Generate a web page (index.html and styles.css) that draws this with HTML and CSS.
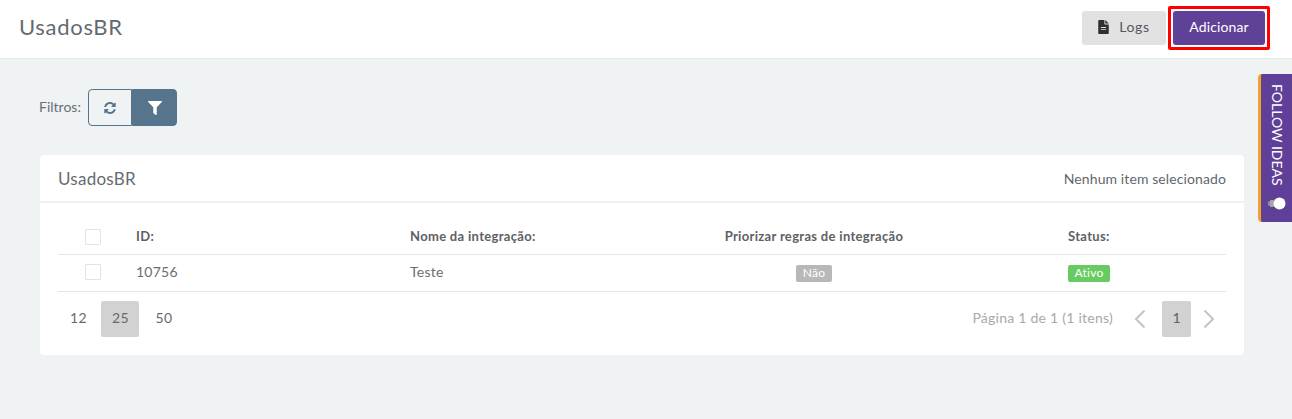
FILE: index.html
```html
<!DOCTYPE html>
<html lang="pt-BR">
<head>
<meta charset="utf-8">
<title>UsadosBR</title>
<link rel="stylesheet" href="styles.css">
</head>
<body>
<header class="topbar">
  <h1 class="page-title">UsadosBR</h1>
  <div class="top-actions">
    <button class="btn btn-logs">
      <svg class="file-icon" viewBox="0 0 12 16" width="11" height="14"><path fill="#2f2f33" fill-rule="evenodd" d="M1.2 0H7v4.2c0 .5.3.8.8.8H12v9.8c0 .7-.5 1.2-1.200 1.200H1.200C.5 16 0 15.500 0 14.800V1.200C0 .5.500 0 1.200 0zM8 0l4 4H8zM3 8v1h6V8zm0 2.500v1h6v-1z"/></svg>
      <span>Logs</span>
    </button>
    <span class="highlight"><button class="btn btn-add">Adicionar</button></span>
  </div>
</header>
<main class="content">
  <div class="filters">
    <span class="filters-label">Filtros:</span>
    <div class="btn-group">
      <button class="seg seg-refresh" aria-label="Atualizar">
        <svg viewBox="0 0 512 512" width="12" height="12"><path fill="#56748c" d="M370.700 133.300A168 168 0 0 0 93 199.500 12 12 0 0 1 81.400 208H24.100a12 12 0 0 1-11.800-14.200C34 82 135.200 0 256 0c66 0 126 26.700 169.500 70.500L460 36c15-15 41-4.400 41 17v134c0 13.300-10.700 24-24 24H343c-21.400 0-32-25.900-17-41zM32 296h134c21.400 0 32 25.900 17 41l-41.700 41.700A168 168 0 0 0 419 312.500a12 12 0 0 1 11.600-8.500h57.300a12 12 0 0 1 11.800 14.200C478 430 376.800 512 256 512c-66 0-126-26.700-169.500-70.500L52 476c-15 15-41 4.400-41-17V320c0-13.300 10.700-24 21-24z"/></svg>
      </button>
      <button class="seg seg-filter" aria-label="Filtrar">
        <svg viewBox="0 0 512 512" width="14" height="14"><path fill="#fff" d="M487.900 0H24.100C2.800 0-8 25.900 7.100 41L192 225.900V432c0 7.800 3.800 15.200 10.200 19.700l80 56C298 518.700 320 507.500 320 487.700V225.900L504.900 41C520 25.900 509.300 0 487.900 0z"/></svg>
      </button>
    </div>
  </div>
  <section class="card">
    <div class="card-head">
      <h2 class="card-title">UsadosBR</h2>
      <span class="selection">Nenhum item selecionado</span>
    </div>
    <div class="card-body">
      <div class="row row-head">
        <div class="col-check"><span class="checkbox"></span></div>
        <div class="col-id">ID:</div>
        <div class="col-name">Nome da integração:</div>
        <div class="col-prio">Priorizar regras de integração</div>
        <div class="col-status">Status:</div>
      </div>
      <div class="row row-data">
        <div class="col-check"><span class="checkbox"></span></div>
        <div class="col-id">10756</div>
        <div class="col-name">Teste</div>
        <div class="col-prio"><span class="tag tag-no">Não</span></div>
        <div class="col-status"><span class="tag tag-yes">Ativo</span></div>
      </div>
      <div class="table-foot">
        <div class="sizes">
          <span class="size size-first">12</span>
          <span class="size size-on">25</span>
          <span class="size size-last">50</span>
        </div>
        <div class="pager">
          <span class="pager-info">Página 1 de 1 (1 itens)</span>
          <svg class="chev" viewBox="0 0 12 20" width="12" height="20"><path d="M10.500 1.500 2 10l8.500 8.500" fill="none" stroke="#c4c4c4" stroke-width="2"/></svg>
          <span class="page-num">1</span>
          <svg class="chev" viewBox="0 0 12 20" width="12" height="20"><path d="M1.500 1.500 10 10l-8.500 8.500" fill="none" stroke="#c4c4c4" stroke-width="2"/></svg>
        </div>
      </div>
    </div>
  </section>
</main>
<aside class="follow">
  <span class="follow-text">FOLLOW IDEAS</span>
  <svg class="bulb" viewBox="0 0 18 13" width="18" height="13"><rect x="0" y="4" width="2" height="5" rx="1" fill="#8b8f93"/><rect x="2" y="3" width="4" height="7" rx="1" fill="#a5a8aa"/><circle cx="11.500" cy="6.500" r="6" fill="#fff"/></svg>
</aside>
</body>
</html>
```
FILE: styles.css
```css
* { box-sizing: border-box; }
html, body { margin: 0; padding: 0; }
body {
  height: 419px;
  overflow: hidden;
  background: #eff3f4;
  color: #5f6368;
  font-family: "Lato", "Noto Sans", sans-serif;
  font-size: 14px;
}
button { font-family: inherit; cursor: pointer; }

.topbar {
  height: 59px;
  background: #fff;
  border-bottom: 1px solid #e8eaeb;
  display: flex;
  align-items: center;
  justify-content: space-between;
  padding: 0 22px 2px 19px;
}
.page-title { margin: 0 0 3px; font-size: 22px; font-weight: 400; color: #646a70; letter-spacing: .7px; }
.top-actions { display: flex; align-items: center; gap: 2px; }
.btn {
  height: 34px;
  border: 0;
  border-radius: 3px;
  font-size: 14px;
  letter-spacing: .1px;
  padding: 0 0 3px;
  display: flex;
  align-items: center;
  justify-content: center;
}
.btn-logs { width: 84px; background: #e2e2e2; color: #55585c; gap: 10px; letter-spacing: .6px; }
.btn-logs .file-icon { margin-bottom: -1px; }
.highlight { display: block; padding: 2px; border: 3px solid #f00; border-radius: 2px; }
.btn-add { width: 92px; background: #5f4197; color: #fff; }

.content { padding: 30px 48px 0 40px; }
.filters { display: flex; align-items: center; gap: 7px; margin-left: -1px; height: 37px; }
.filters-label { width: 42px; white-space: nowrap; color: #6a6f74; font-size: 14px; padding-bottom: 2px; }
.btn-group { display: flex; height: 37px; }
.seg { width: 44px; padding: 0; display: flex; align-items: center; justify-content: center; border: 1px solid #56748c; background: transparent; }
.seg-refresh { border-radius: 4px 0 0 4px; }
.seg-filter { width: 45px; background: #56748c; border-radius: 0 4px 4px 0; }

.card {
  margin-top: 29px;
  height: 200px;
  background: #fff;
  border-radius: 3px;
  box-shadow: 0 0 1px rgba(0,0,0,.08);
}
.card-head {
  height: 48px;
  border-bottom: 2px solid #eff1f2;
  padding: 0 18px;
  display: flex;
  align-items: center;
  justify-content: space-between;
}
.card-title { margin: 0; font-size: 17px; font-weight: 400; color: #666c72; letter-spacing: .25px; }
.selection { font-size: 14px; color: #62676c; letter-spacing: .1px; }
.card-body { padding: 0 18px; }

.row { display: flex; align-items: center; border-bottom: 1px solid #e4e5e6; }
.row-head { height: 52px; padding-top: 16px; font-size: 13px; font-weight: 700; color: #5d6166; letter-spacing: .32px; }
.row-head .col-id, .row-head .col-name, .row-head .col-prio, .row-head .col-status { padding-bottom: 2px; }
.row-data { height: 37px; font-size: 14px; color: #696e73; padding-bottom: 2px; letter-spacing: .25px; }
.row-data .col-id, .row-data .col-name { padding-bottom: 2px; }
.col-check { width: 78px; padding-left: 27px; display: flex; }
.col-id { width: 274px; }
.col-name { width: 254px; }
.col-prio { width: 300px; display: flex; justify-content: center; }
.col-status { flex: 1; padding-left: 104px; display: flex; }
.checkbox { width: 16px; height: 16px; border: 1px solid #e2e3e4; border-radius: 1px; background: #fff; }
.tag {
  display: block;
  height: 17px;
  line-height: 15px;
  font-size: 12px;
  border-radius: 2px;
  color: #fff;
  margin-top: 3px;
  text-align: center;
}
.tag-no { width: 36px; background: #b8b8b8; }
.tag-yes { width: 42px; background: #68cb62; }

.table-foot { display: flex; align-items: center; justify-content: space-between; height: 54px; padding-bottom: 1px; }
.sizes { display: flex; color: #666b70; }
.size { width: 38px; height: 36px; display: flex; align-items: center; justify-content: center; border-radius: 2px; padding-bottom: 2px; letter-spacing: .3px; }
.size-first { width: 43px; justify-content: flex-start; padding-left: 12px; }
.size-on { background: #d2d2d2; padding-left: 1px; }
.size-last { margin-left: 6px; }
.pager { display: flex; align-items: center; }
.pager-info { color: #a7a9ab; font-size: 14px; margin-right: 21px; padding-bottom: 2px; letter-spacing: .25px; }
.page-num { width: 29px; height: 36px; margin: 0 12px 0 16px; background: #d2d2d2; border-radius: 2px; display: flex; align-items: center; justify-content: center; color: #5e6166; padding-bottom: 2px; }
.chev { display: block; }
.chev:last-child { margin-right: 11px; }

.follow {
  position: absolute;
  top: 74px;
  right: 0;
  width: 34px;
  height: 148px;
  background: #5f3f97;
  border-left: 3px solid #f2a32c;
  border-radius: 4px 0 0 4px;
  display: flex;
  flex-direction: column;
  align-items: center;
  padding-top: 10px;
  color: #fff;
}
.follow-text { writing-mode: vertical-rl; font-size: 14px; line-height: 16px; white-space: nowrap; }
.bulb { margin-top: 11px; }
```
